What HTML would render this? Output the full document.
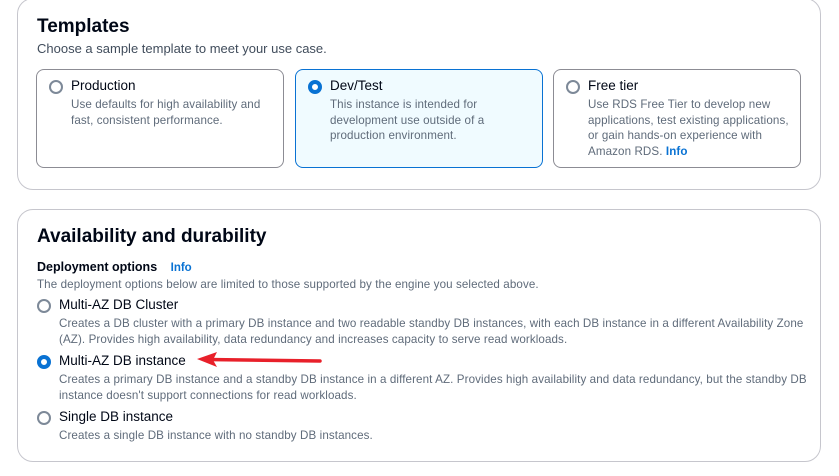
<!DOCTYPE html>
<html><head><style>
*{box-sizing:border-box;margin:0;padding:0}
body{width:839px;height:476px;background:#fff;font-family:"Liberation Sans",Arial,sans-serif;color:#000716;position:relative;overflow:hidden}
.panel{position:absolute;left:17px;width:804px;border:1px solid #c6c6cd;border-radius:16px;background:#fff}
h2{position:absolute;left:19px;font-size:19px;font-weight:bold;color:#000716}
.sub{position:absolute;font-size:13px;color:#414d5c}
.card{position:absolute;top:70px;width:248px;height:99px;border:1px solid #8c8c94;border-radius:8px}
.card.sel{border-color:#0972d3;background:#f0fbff}
.radio{position:absolute;width:14px;height:14px;border-radius:50%;border:2px solid #7d8998;background:#fff}
.radio.on{border:4px solid #0972d3}
.lbl{position:absolute;font-size:13.5px;color:#000716}
.desc{position:absolute;font-size:11.6px;color:#5f6b7a;line-height:15.5px;letter-spacing:0.1px}
.info{color:#0972d3;font-weight:bold}
</style></head><body>
<div class="panel" style="top:-2px;height:192px">
  <h2 style="top:17px">Templates</h2>
  <div class="sub" style="left:19px;top:42px">Choose a sample template to meet your use case.</div>
  <div class="card" style="left:18px">
    <div class="radio" style="left:12px;top:10px"></div>
    <div class="lbl" style="left:34px;top:8px">Production</div>
    <div class="desc" style="left:34px;top:27px;width:200px">Use defaults for high availability and fast, consistent performance.</div>
  </div>
  <div class="card sel" style="left:277px">
    <div class="radio on" style="left:12px;top:10px"></div>
    <div class="lbl" style="left:34px;top:8px">Dev/Test</div>
    <div class="desc" style="left:34px;top:27px;width:180px">This instance is intended for development use outside of a production environment.</div>
  </div>
  <div class="card" style="left:535px">
    <div class="radio" style="left:12px;top:10px"></div>
    <div class="lbl" style="left:34px;top:8px">Free tier</div>
    <div class="desc" style="left:34px;top:27px;width:205px">Use RDS Free Tier to develop new applications, test existing applications, or gain hands-on experience with Amazon RDS. <span class="info">Info</span></div>
  </div>
</div>
<div class="panel" style="top:209px;height:253px">
  <h2 style="top:16px">Availability and durability</h2>
  <div style="position:absolute;left:19px;top:50px;font-size:12.5px;font-weight:bold">Deployment options <span class="info" style="margin-left:10px;font-size:11.5px">Info</span></div>
  <div class="desc" style="left:19px;top:67px">The deployment options below are limited to those supported by the engine you selected above.</div>
  <div class="radio" style="left:19px;top:89px"></div>
  <div class="lbl" style="left:41px;top:87px">Multi-AZ DB Cluster</div>
  <div class="desc" style="left:41px;top:106px;width:748px">Creates a DB cluster with a primary DB instance and two readable standby DB instances, with each DB instance in a different Availability Zone (AZ). Provides high availability, data redundancy and increases capacity to serve read workloads.</div>
  <div class="radio on" style="left:19px;top:145px"></div>
  <div class="lbl" style="left:41px;top:143px">Multi-AZ DB instance</div>
  <div class="desc" style="left:41px;top:162px;width:748px">Creates a primary DB instance and a standby DB instance in a different AZ. Provides high availability and data redundancy, but the standby DB instance doesn't support connections for read workloads.</div>
  <div class="radio" style="left:19px;top:201px"></div>
  <div class="lbl" style="left:41px;top:199px">Single DB instance</div>
  <div class="desc" style="left:41px;top:218px">Creates a single DB instance with no standby DB instances.</div>
</div>
<svg style="position:absolute;left:195px;top:350px" width="130" height="20"><line x1="125" y1="11" x2="12" y2="9.5" stroke="#e8202a" stroke-width="3.5" stroke-linecap="round"/><polygon points="2,9 22,2 18,10 22,17" fill="#e8202a"/></svg>
</body></html>
